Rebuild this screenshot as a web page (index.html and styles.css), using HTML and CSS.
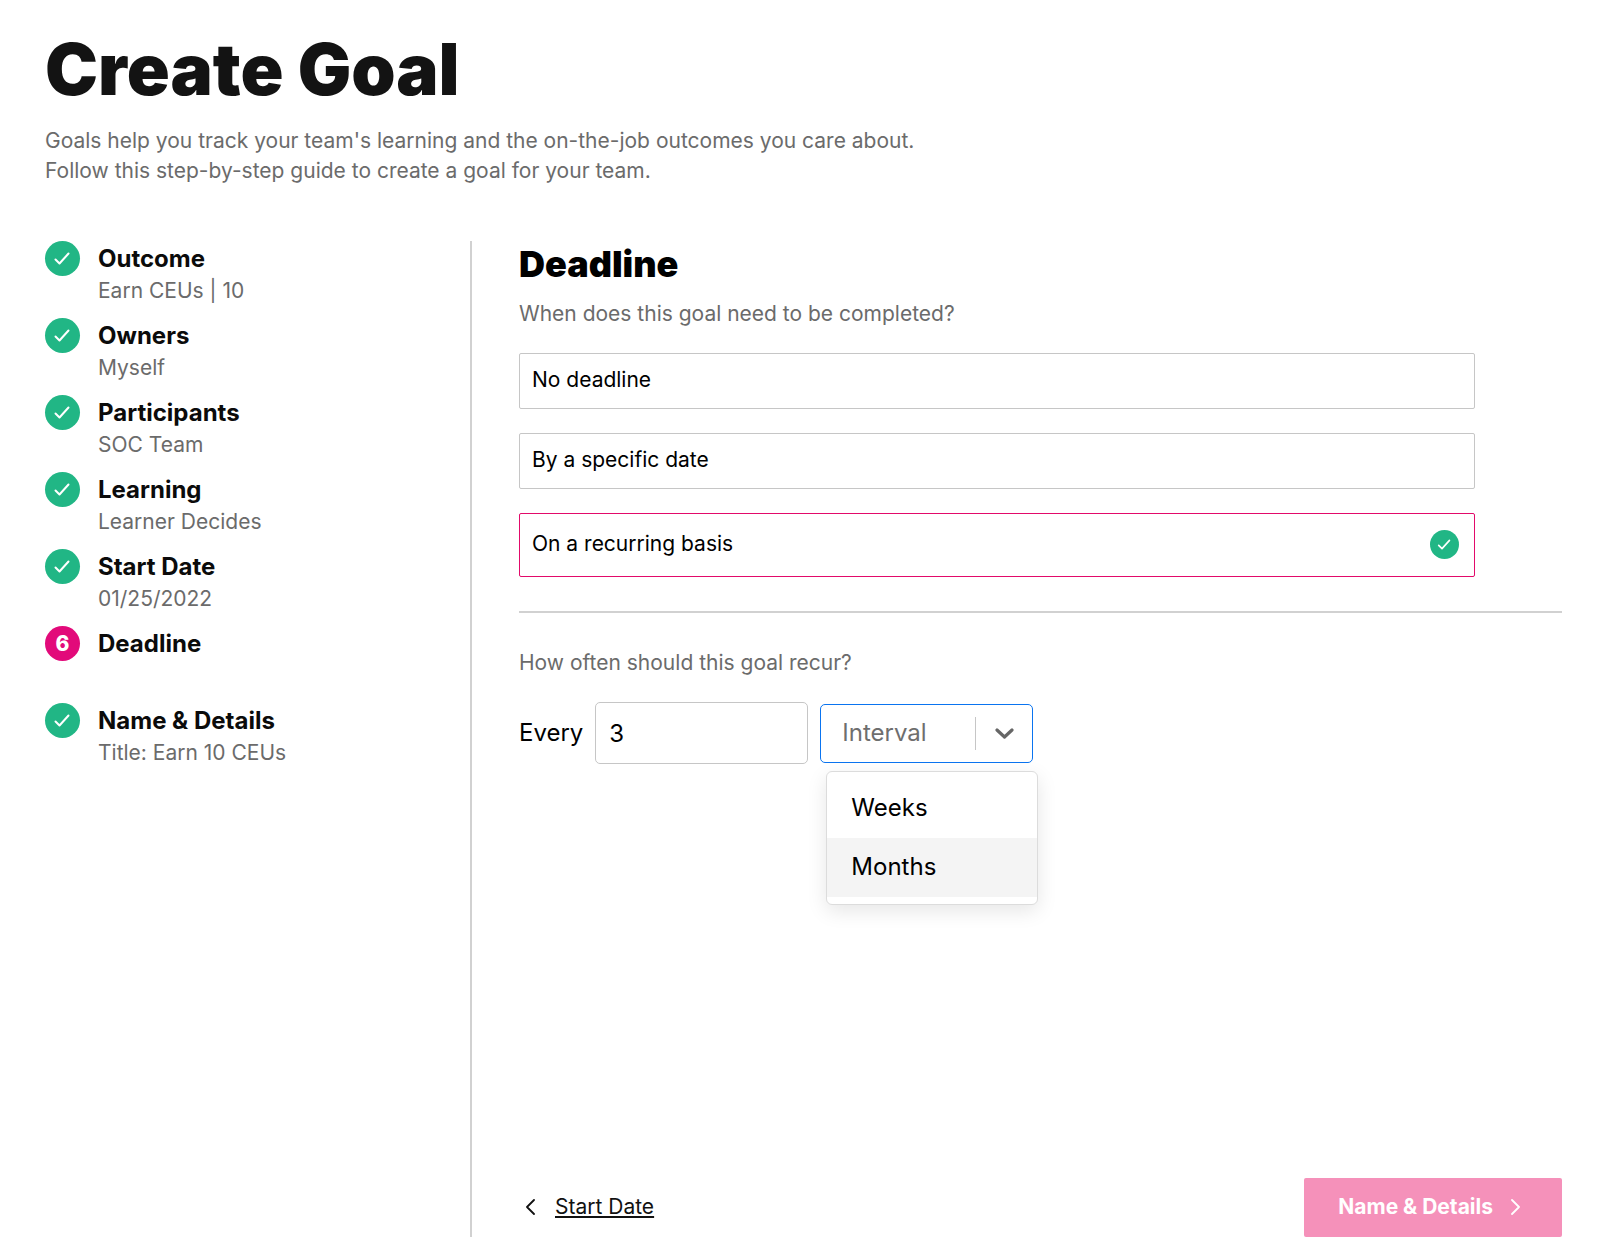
FILE: index.html
```html
<!DOCTYPE html>
<html lang="en">
<head>
  <meta charset="UTF-8">
  <meta name="viewport" content="width=device-width, initial-scale=1">
  <title>Create Goal</title>
  <link rel="stylesheet" href="styles.css">
</head>
<body>

<svg class="sprite" aria-hidden="true">
  <symbol id="check" viewBox="0 0 35 35">
    <path d="M10.500 18.500l4 4 9-10" fill="none" stroke="#fff" stroke-width="2" stroke-linecap="round" stroke-linejoin="round"/>
  </symbol>
</svg>

<header class="page-header">
  <h1>Create Goal</h1>
  <p>Goals help you track your team's learning and the on-the-job outcomes you care about.<br>
  Follow this step-by-step guide to create a goal for your team.</p>
</header>

<div class="wizard">
  <ol class="steps">
    <li class="step">
      <span class="badge"><svg><use href="#check"/></svg></span>
      <div><h3>Outcome</h3><p>Earn CEUs | 10</p></div>
    </li>
    <li class="step">
      <span class="badge"><svg><use href="#check"/></svg></span>
      <div><h3>Owners</h3><p>Myself</p></div>
    </li>
    <li class="step">
      <span class="badge"><svg><use href="#check"/></svg></span>
      <div><h3>Participants</h3><p>SOC Team</p></div>
    </li>
    <li class="step">
      <span class="badge"><svg><use href="#check"/></svg></span>
      <div><h3>Learning</h3><p>Learner Decides</p></div>
    </li>
    <li class="step">
      <span class="badge"><svg><use href="#check"/></svg></span>
      <div><h3>Start Date</h3><p>01/25/2022</p></div>
    </li>
    <li class="step">
      <span class="badge current">6</span>
      <div><h3>Deadline</h3></div>
    </li>
    <li class="step">
      <span class="badge"><svg><use href="#check"/></svg></span>
      <div><h3>Name &amp; Details</h3><p>Title: Earn 10 CEUs</p></div>
    </li>
  </ol>

  <main class="panel">
    <h2>Deadline</h2>
    <p class="question">When does this goal need to be completed?</p>

    <div class="options" role="radiogroup" aria-label="Deadline">
      <label class="option"><input type="radio" name="deadline" value="none">No deadline</label>
      <label class="option"><input type="radio" name="deadline" value="date">By a specific date</label>
      <label class="option selected">
        <input type="radio" name="deadline" value="recurring" checked>On a recurring basis
        <span class="badge small"><svg><use href="#check"/></svg></span>
      </label>
    </div>

    <hr>

    <p class="question">How often should this goal recur?</p>
    <div class="recur">
      <label for="every">Every</label>
      <input class="every" type="text" id="every" inputmode="numeric" value="3">
      <div class="interval">
        <select id="interval" aria-label="Interval">
          <option value="" selected>Interval</option>
          <option>Weeks</option>
          <option>Months</option>
        </select>
        <span class="arrow">
          <svg width="19" height="11" viewBox="0 0 19 11"><path d="M2 2l7.500 7L17 2" fill="none" stroke="#666" stroke-width="3.200" stroke-linecap="round" stroke-linejoin="round"/></svg>
        </span>
        <div class="menu">
          <button type="button" data-value="Weeks">Weeks</button>
          <button type="button" class="active" data-value="Months">Months</button>
        </div>
      </div>
    </div>

    <footer class="nav">
      <a class="back" href="#start-date">
        <svg width="11" height="16" viewBox="0 0 11 16"><path d="M9 1L2 8l7 7" fill="none" stroke="#111" stroke-width="1.800" stroke-linecap="round" stroke-linejoin="round"/></svg>
        <span>Start Date</span>
      </a>
      <button type="button" class="next">
        Name &amp; Details
        <svg width="11" height="16" viewBox="0 0 11 16"><path d="M2 1l7 7-7 7" fill="none" stroke="#fff" stroke-width="1.800" stroke-linecap="round" stroke-linejoin="round"/></svg>
      </button>
    </footer>
  </main>
</div>

<script>
  document.querySelectorAll('.menu button').forEach(function (item) {
    item.addEventListener('click', function () {
      document.getElementById('interval').value = item.dataset.value;
    });
  });
</script>

</body>
</html>
```
FILE: styles.css
```css
* {
  box-sizing: border-box;
}

body {
  margin: 0;
  min-height: 100vh;
  padding: 24px 38px 23px 45px;
  display: flex;
  flex-direction: column;
  font-family: Inter, "Liberation Sans", sans-serif;
  font-size: 21px;
  line-height: 30px;
  color: #000;
  background: #fff;
}

h1, h2, h3, p {
  margin: 0;
}

input, select, button {
  font: inherit;
  color: inherit;
}

.sprite {
  position: absolute;
  width: 0;
  height: 0;
}

.page-header h1 {
  font-size: 71px;
  line-height: 90px;
  font-weight: 900;
  color: #131313;
}

.page-header p {
  margin-top: 12px;
  color: #6b6b6b;
}

.wizard {
  flex: 1;
  display: flex;
  margin-top: 55px;
}

/* left column */
.steps {
  width: 427px;
  flex-shrink: 0;
  margin: 0;
  padding: 0;
  list-style: none;
  border-right: 2px solid #d1d1d1;
}

.step {
  display: flex;
  gap: 18px;
  height: 77px;
}

.step h3 {
  font-size: 24px;
  line-height: 36px;
  font-weight: 700;
  color: #0b0b0b;
}

.step p {
  line-height: 28px;
  color: #6b6b6b;
}

.badge {
  width: 35px;
  height: 35px;
  flex-shrink: 0;
  display: flex;
  align-items: center;
  justify-content: center;
  border-radius: 50%;
  background: #21b685;
}

.badge svg {
  width: 100%;
  height: 100%;
}

.badge.current {
  background: #e20a7a;
  color: #fff;
  font-weight: 800;
}

.badge.small {
  width: 29px;
  height: 29px;
  margin-left: auto;
}

/* right column */
.panel {
  flex: 1;
  display: flex;
  flex-direction: column;
  padding-left: 47px;
}

.panel h2 {
  font-size: 36px;
  line-height: 46px;
  font-weight: 900;
}

.question {
  color: #6b6b6b;
}

.panel h2 + .question {
  margin-top: 12px;
}

.options {
  display: flex;
  flex-direction: column;
  gap: 24px;
  margin: 24px 87px 0 0;
}

.option {
  display: flex;
  align-items: center;
  height: 56px;
  padding: 0 15px 2px 12px;
  border: 1px solid #c6c6c6;
  border-radius: 2px;
  cursor: pointer;
}

.option input {
  position: absolute;
  opacity: 0;
}

.option.selected {
  height: 64px;
  border-color: #e20a6a;
}

hr {
  width: 100%;
  margin: 34px 0 35px;
  border: 0;
  border-top: 2px solid #d1d1d1;
}

.recur {
  display: flex;
  align-items: center;
  gap: 12px;
  margin-top: 24px;
  font-size: 24px;
}

.every {
  width: 213px;
  height: 62px;
  padding: 0 13px;
  border: 1px solid #c6c6c6;
  border-radius: 5px;
}

.interval {
  position: relative;
  width: 213px;
}

.interval select {
  display: block;
  width: 100%;
  height: 59px;
  padding: 0 60px 0 21px;
  appearance: none;
  border: 1px solid #0a74f0;
  border-radius: 5px;
  background: #fff;
  color: #6e6e6e;
}

.arrow {
  position: absolute;
  top: 13px;
  right: 1px;
  width: 57px;
  height: 33px;
  display: flex;
  align-items: center;
  justify-content: center;
  border-left: 1px solid #c6c6c6;
  pointer-events: none;
}

.menu {
  position: absolute;
  top: 67px;
  left: 6px;
  width: 212px;
  padding: 7px 0;
  border: 1px solid #dcdcdc;
  border-radius: 6px;
  background: #fff;
  box-shadow: 0 6px 20px rgba(0, 0, 0, 0.1);
}

.menu button {
  display: block;
  width: 100%;
  height: 59px;
  padding: 0 24px;
  border: 0;
  background: none;
  text-align: left;
  cursor: pointer;
}

.menu button.active {
  background: #f4f4f4;
}

.nav {
  display: flex;
  align-items: center;
  justify-content: space-between;
  margin-top: auto;
}

.back {
  display: flex;
  align-items: center;
  gap: 19px;
  padding: 0 0 2px 6px;
  color: #111;
  text-decoration: none;
}

.back span {
  text-decoration: underline;
}

.next {
  display: flex;
  align-items: center;
  gap: 17px;
  height: 59px;
  padding: 0 41px 2px 34px;
  border: 0;
  border-radius: 2px;
  background: #f591ba;
  color: #fff;
  font-weight: 700;
  cursor: pointer;
}
```
